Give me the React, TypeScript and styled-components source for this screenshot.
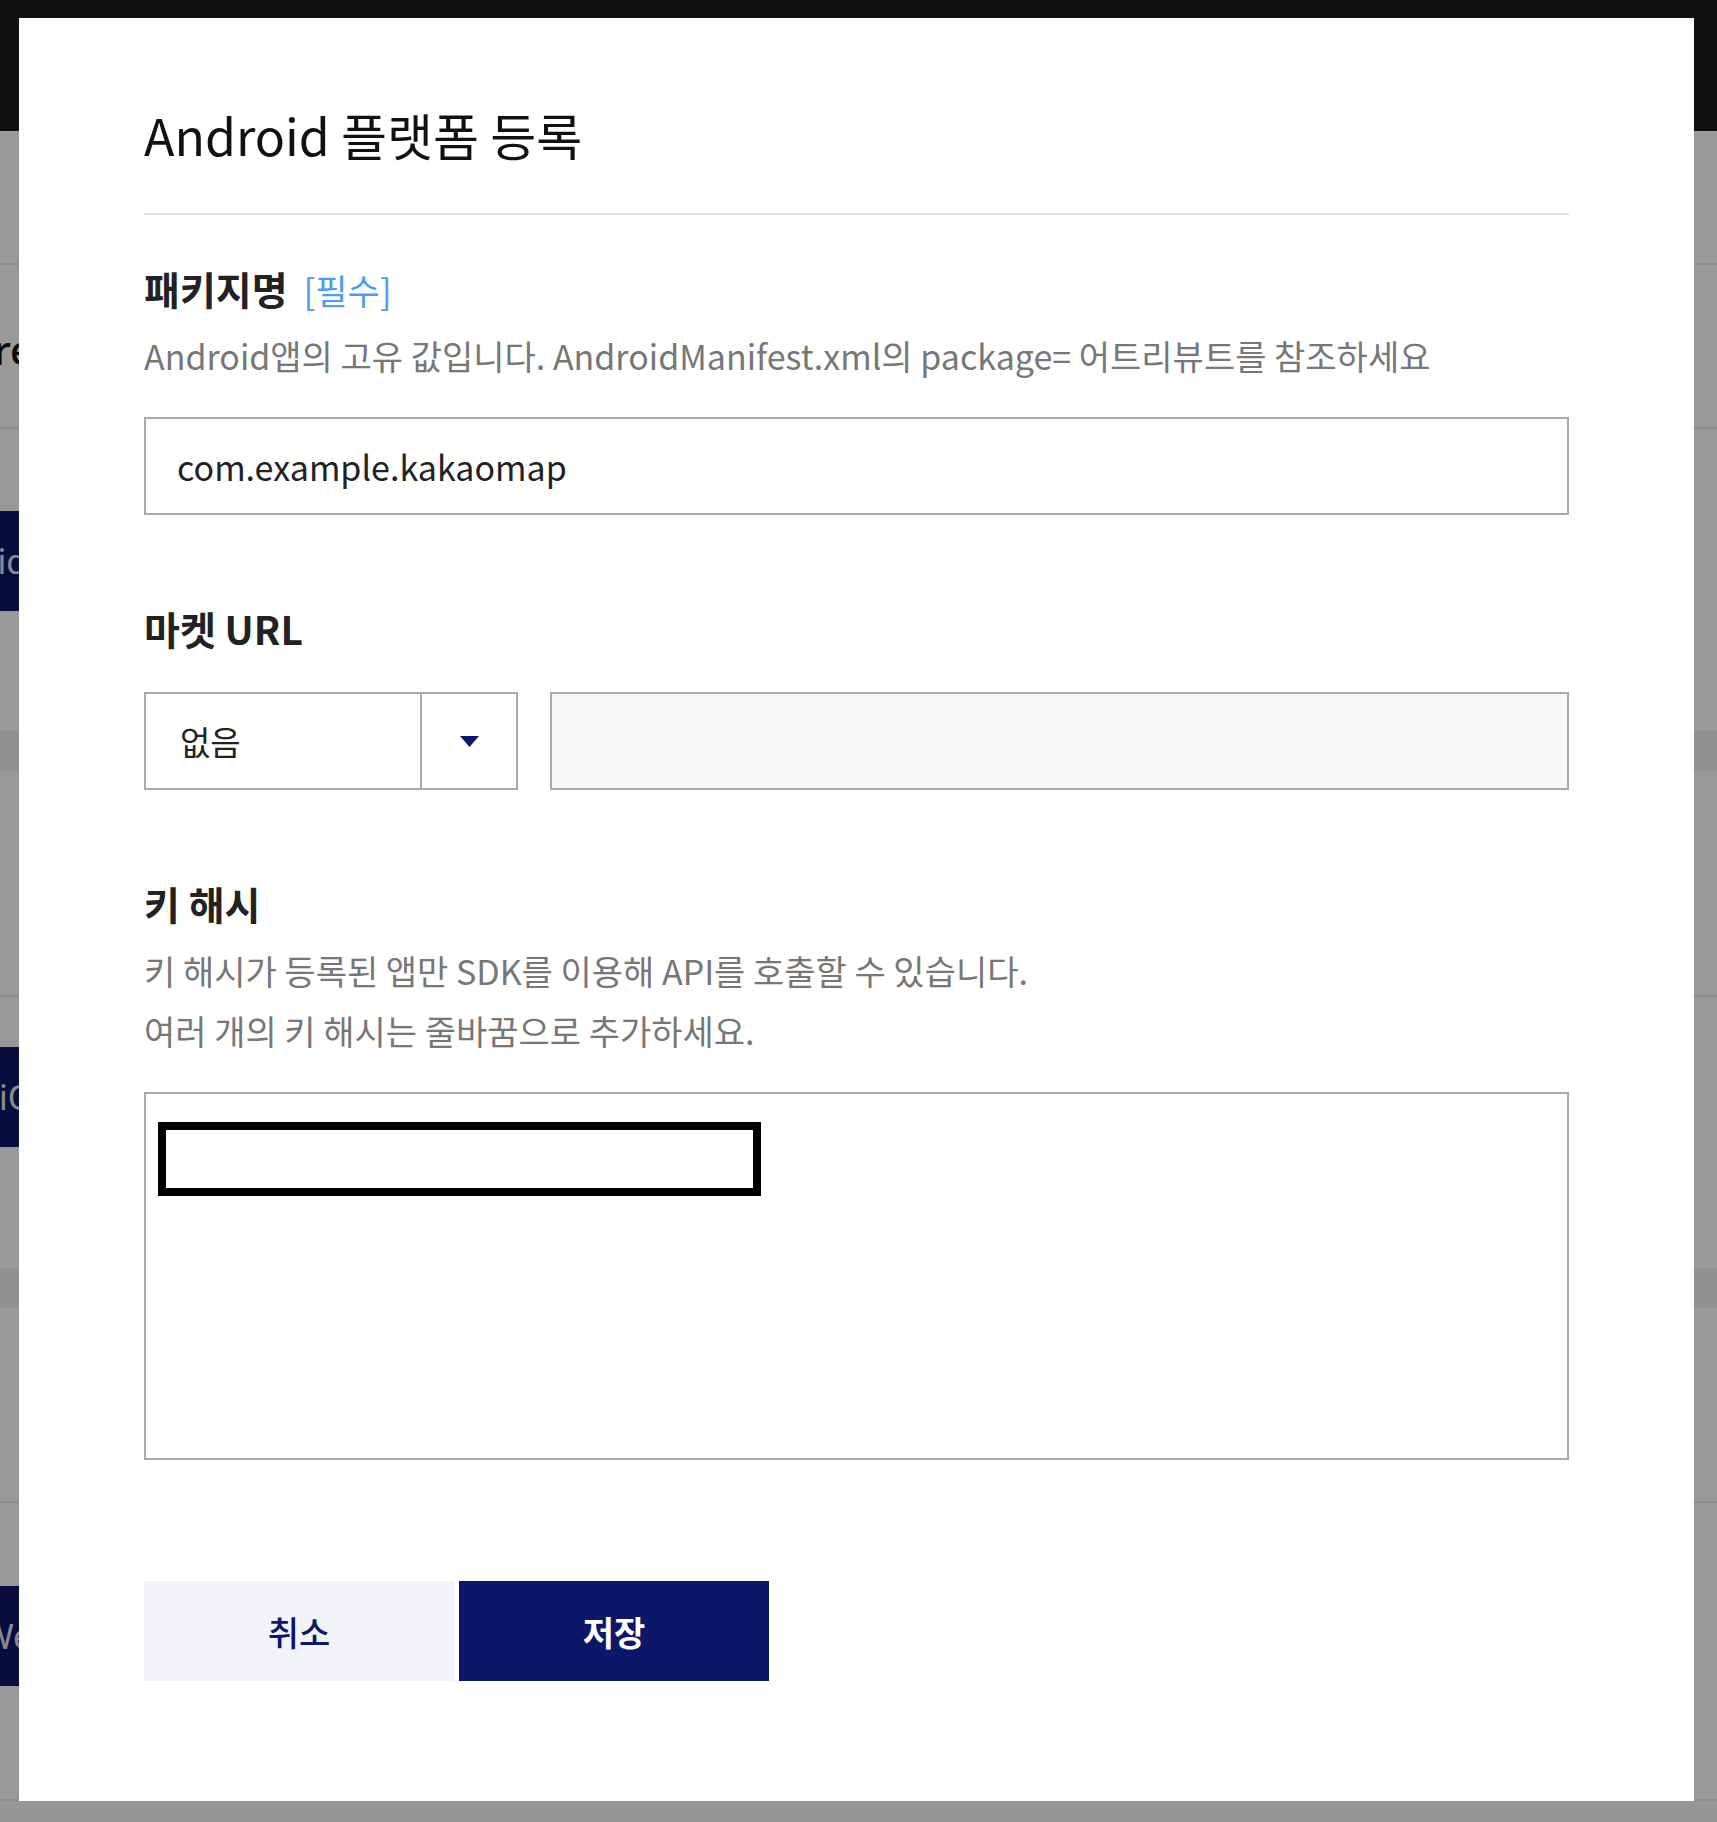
import React from 'react';
import styled, { createGlobalStyle } from 'styled-components';

const GlobalStyle = createGlobalStyle`
  html, body { margin: 0; padding: 0; }
  body {
    font-family: "Noto Sans CJK KR", "Noto Sans", sans-serif;
    background: #ffffff;
    overflow: hidden;
  }
  *, *::before, *::after { box-sizing: border-box; }
`;

/* ---------- underlying page (dimmed by the overlay) ---------- */
const Page = styled.div`
  width: 1717px;
  height: 1822px;
  background: #ffffff;
  display: flex;
  flex-direction: column;
  overflow: hidden;
`;

const TopBar = styled.header`
  height: 131px;
  flex-shrink: 0;
  background: #1c1c1c;
`;

const PageRow = styled.section<{ $h: number; $top: number }>`
  height: ${(p) => p.$h}px;
  flex-shrink: 0;
  border-bottom: 2px solid #e9e9e9;
  padding-top: ${(p) => p.$top}px;
  display: flex;
  flex-direction: column;
  align-items: flex-start;
`;

const PageHeading = styled.h3`
  margin: 0 0 0 -6px;
  font-size: 40px;
  line-height: 50px;
  font-weight: 500;
  color: #111;
  font-family: "Noto Sans", sans-serif;
`;

const PlatformButton = styled.div<{ $shift: number }>`
  height: 100px;
  width: 360px;
  margin-left: ${(p) => p.$shift}px;
  background: #0c1769;
  color: #e6e8ef;
  font-size: 34px;
  font-family: "Noto Sans", sans-serif;
  display: flex;
  align-items: center;
  white-space: nowrap;
`;

const Band = styled.div<{ $gap: number }>`
  margin-top: ${(p) => p.$gap}px;
  height: 40px;
  align-self: stretch;
  background: #eef1ee;
`;

const PageFooter = styled.footer`
  flex: 1;
  background: #f8faf8;
`;

/* ---------- overlay + modal ---------- */
const Overlay = styled.div`
  position: fixed;
  inset: 0;
  background: rgba(0, 0, 0, 0.4);
  padding: 18px 23px 21px 19px;
  display: flex;
`;

const Modal = styled.div`
  flex: 1;
  background: #ffffff;
  padding: 86px 125px 120px;
  display: flex;
  flex-direction: column;
`;

const Title = styled.h2`
  margin: 0 0 48px;
  padding-bottom: 49px;
  border-bottom: 2px solid #e4e4e4;
  font-size: 50px;
  line-height: 60px;
  font-weight: 400;
  color: #111;
  white-space: nowrap;
`;

const Field = styled.div<{ $last?: boolean }>`
  display: flex;
  flex-direction: column;
  margin-bottom: ${(p) => (p.$last ? 0 : 88)}px;
`;

const Label = styled.h3`
  margin: 0;
  height: 50px;
  font-size: 39px;
  line-height: 50px;
  font-weight: 700;
  color: #222;
  white-space: nowrap;
`;

const Required = styled.span`
  margin-left: 16px;
  font-size: 35px;
  font-weight: 400;
  color: #4b9cf5;
  vertical-align: baseline;
`;

const Hint = styled.p`
  margin: 13px 0 0;
  font-size: 34px;
  line-height: 60px;
  font-weight: 400;
  color: #777;
  white-space: nowrap;
`;

const TextInput = styled.input`
  margin-top: 31px;
  height: 98px;
  width: 100%;
  border: 2px solid #aaaaaa;
  border-radius: 0;
  padding: 0 31px;
  font-family: inherit;
  font-size: 34px;
  color: #222;
  background: #fff;
  outline: none;
`;

const MarketRow = styled.div`
  margin-top: 39px;
  display: flex;
  gap: 32px;
  height: 98px;
`;

const Select = styled.div`
  width: 374px;
  flex-shrink: 0;
  border: 2px solid #aaaaaa;
  display: flex;
  background: #fff;
`;

const SelectValue = styled.div`
  flex: 1;
  display: flex;
  align-items: center;
  padding-left: 34px;
  font-size: 33px;
  color: #222;
`;

const SelectArrow = styled.div`
  width: 96px;
  border-left: 2px solid #aaaaaa;
  display: flex;
  align-items: center;
  justify-content: center;
`;

const UrlInput = styled.input`
  flex: 1;
  border: 2px solid #aaaaaa;
  border-radius: 0;
  background: #f7f8f7;
  font-family: inherit;
  font-size: 34px;
  padding: 0 31px;
  outline: none;
`;

const AreaWrap = styled.div`
  position: relative;
  margin-top: 31px;
  height: 368px;
  border: 2px solid #aaaaaa;
  display: flex;
`;

const KeyArea = styled.textarea`
  flex: 1;
  border: none;
  resize: none;
  outline: none;
  font-family: inherit;
  font-size: 32px;
  background: transparent;
`;

const Redaction = styled.div`
  position: absolute;
  left: 12px;
  top: 28px;
  width: 603px;
  height: 74px;
  border: 8px solid #000;
  background: #fff;
`;

const Actions = styled.div`
  margin-top: 121px;
  display: flex;
  gap: 5px;
`;

const ActionButton = styled.button<{ $primary?: boolean }>`
  width: 310px;
  height: 100px;
  border: none;
  border-radius: 0;
  font-family: inherit;
  font-size: 34px;
  font-weight: ${(p) => (p.$primary ? 700 : 500)};
  background: ${(p) => (p.$primary ? '#0c1769' : '#f2f3f8')};
  color: ${(p) => (p.$primary ? '#ffffff' : '#0c1769')};
  cursor: pointer;
`;

export default function App() {
  return (
    <>
      <GlobalStyle />
      <Page>
        <TopBar />
        <PageRow $h={134} $top={0} />
        <PageRow $h={164} $top={60}>
          <PageHeading>re</PageHeading>
        </PageRow>
        <PageRow $h={568} $top={82}>
          <PlatformButton $shift={-100}>Android</PlatformButton>
          <Band $gap={120} />
        </PageRow>
        <PageRow $h={506} $top={50}>
          <PlatformButton $shift={-1}>iOS</PlatformButton>
          <Band $gap={121} />
        </PageRow>
        <PageRow $h={298} $top={83}>
          <PlatformButton $shift={-18}>Web</PlatformButton>
        </PageRow>
        <PageFooter />
      </Page>
      <Overlay>
        <Modal>
          <Title>Android 플랫폼 등록</Title>
          <Field>
            <Label>
              패키지명<Required>[필수]</Required>
            </Label>
            <Hint>Android앱의 고유 값입니다. AndroidManifest.xml의 package= 어트리뷰트를 참조하세요</Hint>
            <TextInput defaultValue="com.example.kakaomap" />
          </Field>
          <Field>
            <Label>마켓 URL</Label>
            <MarketRow>
              <Select>
                <SelectValue>없음</SelectValue>
                <SelectArrow>
                  <svg width="19" height="11" viewBox="0 0 19 11">
                    <polygon points="0,0 19,0 9.5,11" fill="#0c1769" />
                  </svg>
                </SelectArrow>
              </Select>
              <UrlInput />
            </MarketRow>
          </Field>
          <Field $last>
            <Label>키 해시</Label>
            <Hint>
              키 해시가 등록된 앱만 SDK를 이용해 API를 호출할 수 있습니다.
              <br />
              여러 개의 키 해시는 줄바꿈으로 추가하세요.
            </Hint>
            <AreaWrap>
              <KeyArea />
              <Redaction />
            </AreaWrap>
          </Field>
          <Actions>
            <ActionButton>취소</ActionButton>
            <ActionButton $primary>저장</ActionButton>
          </Actions>
        </Modal>
      </Overlay>
    </>
  );
}
